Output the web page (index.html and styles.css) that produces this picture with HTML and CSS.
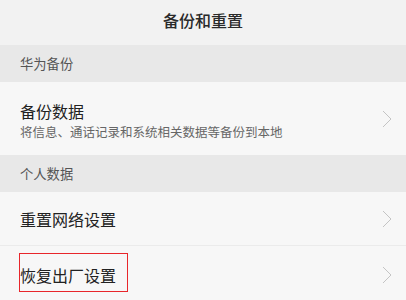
FILE: index.html
```html
<!DOCTYPE html>
<html lang="zh-CN">
<head>
    <meta charset="UTF-8">
    <meta name="viewport" content="width=device-width, initial-scale=1.0">
    <title>备份和重置</title>
    <link rel="stylesheet" href="styles.css">
</head>
<body>
    <div class="title-bar">备份和重置</div>

    <div class="group-header">华为备份</div>
    <div class="item item-tall">
        <div class="item-text">
            <div class="item-title">备份数据</div>
            <div class="item-sub">将信息、通话记录和系统相关数据等备份到本地</div>
        </div>
        <svg class="chevron" width="10" height="18" viewBox="0 0 10 18"><polyline points="1,1 9,9 1,17" fill="none" stroke="#c4c4c4" stroke-width="1"/></svg>
    </div>

    <div class="group-header">个人数据</div>
    <div class="item">
        <div class="item-title">重置网络设置</div>
        <svg class="chevron" width="10" height="18" viewBox="0 0 10 18"><polyline points="1,1 9,9 1,17" fill="none" stroke="#c4c4c4" stroke-width="1"/></svg>
    </div>
    <div class="item last">
        <div class="item-title">恢复出厂设置</div>
        <svg class="chevron" width="10" height="18" viewBox="0 0 10 18"><polyline points="1,1 9,9 1,17" fill="none" stroke="#c4c4c4" stroke-width="1"/></svg>
        <div class="highlight"></div>
    </div>
</body>
</html>
```

FILE: styles.css
```css
body {
    margin: 0;
    font-family: "Noto Sans CJK SC", "Noto Sans", sans-serif;
    background-color: #f7f7f7;
    color: #222;
}

.title-bar {
    height: 45px;
    line-height: 40px;
    text-align: center;
    font-size: 16px;
    font-weight: 500;
    background-color: #f2f2f2;
    color: #2a2a2a;
}

.group-header {
    height: 37px;
    line-height: 37px;
    padding-left: 20px;
    font-size: 13.3px;
    color: #555;
    background-color: #e8e8e8;
}

.item {
    position: relative;
    height: 53px;
    display: flex;
    align-items: center;
    justify-content: space-between;
    padding: 0 14px 0 20px;
    background-color: #f7f7f7;
    border-bottom: 1px solid #ebebeb;
}

.item-tall {
    height: 73px;
    border-bottom: none;
}

.item.last {
    border-bottom: none;
    padding-top: 2px;
}

.item-title {
    font-size: 16px;
    color: #222;
    line-height: 22px;
}

.item-sub {
    margin-top: 2px;
    font-size: 12.5px;
    color: #666;
    line-height: 16px;
}

.item-tall .item-text {
    margin-top: 3px;
}

.chevron {
    flex-shrink: 0;
}

.highlight {
    position: absolute;
    left: 19px;
    top: 7px;
    width: 107px;
    height: 37px;
    border: 1px solid #e8262b;
}
```
